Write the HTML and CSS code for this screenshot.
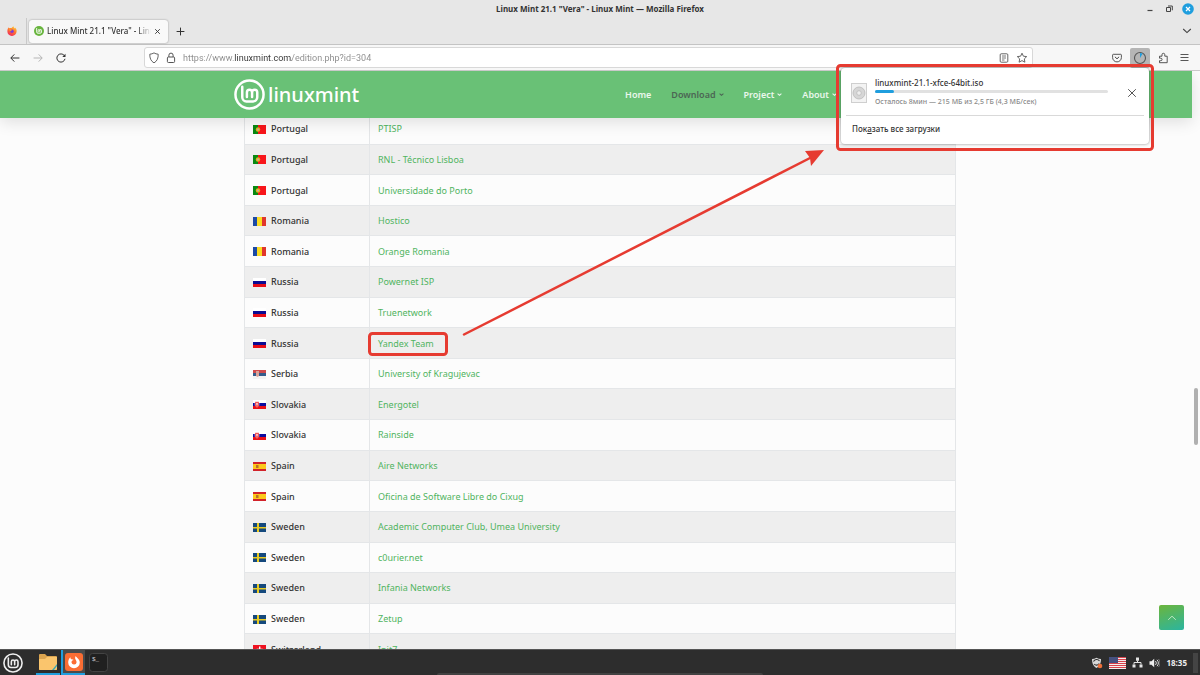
FILE: index.html
```html
<!DOCTYPE html>
<html lang="en">
<head>
<meta charset="utf-8">
<title>Linux Mint 21.1 "Vera" - Linux Mint — Mozilla Firefox</title>
<link rel="stylesheet" href="styles.css">
</head>
<body>
<svg class="defs" aria-hidden="true">
  <defs>
    <linearGradient id="fxg" x1="0.8" y1="0" x2="0.3" y2="1"><stop offset="0" stop-color="#ffd23c"/><stop offset="0.45" stop-color="#ff7a2e"/><stop offset="1" stop-color="#f0285e"/></linearGradient>
    <symbol id="mint" viewBox="0 0 30 30">
      <circle cx="15" cy="15" r="13.600" fill="none" stroke="currentColor" stroke-width="2.400"/>
      <path d="M8 7.500v10.200a4 4 0 0 0 4 4h6.500a4 4 0 0 0 4-4v-4.700a2.500 2.500 0 0 0-5 0v4.500M17.500 13a2.500 2.500 0 0 0-5 0v4.500" fill="none" stroke="currentColor" stroke-width="2.400" stroke-linecap="round"/>
    </symbol>
    <symbol id="mint-tab" viewBox="0 0 30 30">
      <circle cx="15" cy="15" r="15" fill="#69b53f"/>
      <path d="M8 7.500v10.200a4 4 0 0 0 4 4h6.500a4 4 0 0 0 4-4v-4.700a2.500 2.500 0 0 0-5 0v4.500M17.500 13a2.500 2.500 0 0 0-5 0v4.500" fill="none" stroke="#fff" stroke-width="2.800" stroke-linecap="round"/>
    </symbol>
    <symbol id="pt" viewBox="0 0 13 9"><path fill="#f8161b" d="M0 0h13v9H0z"/><path fill="#0a8a12" d="M0 0h5v9H0z"/><circle cx="5" cy="4.500" r="2.200" fill="#e3b31d"/><circle cx="5" cy="4.500" r="1.100" fill="#c9a9a0"/></symbol>
    <symbol id="ro" viewBox="0 0 13 9"><path fill="#e0362c" d="M0 0h13v9H0z"/><path fill="#fbdc22" d="M0 0h9v9H0z"/><path fill="#1c4aa5" d="M0 0h4v9H0z"/></symbol>
    <symbol id="ru" viewBox="0 0 13 9"><path fill="#fff" d="M0 0h13v9H0z"/><path fill="#0b0b93" d="M0 3h13v3H0z"/><path fill="#e60d16" d="M0 6h13v3H0z"/></symbol>
    <symbol id="rs" viewBox="0 0 13 9"><path fill="#f3f3f3" d="M0 0h13v9H0z"/><path fill="#cf4a4c" d="M0 0h13v3H0z"/><path fill="#345c8c" d="M0 3h13v3H0z"/><path fill="#d9a39a" d="M3 1h3v5l-1.500 1L3 6z"/></symbol>
    <symbol id="sk" viewBox="0 0 13 9"><path fill="#fff" d="M0 0h13v9H0z"/><path fill="#0b0ba0" d="M0 3h13v3H0z"/><path fill="#ea1017" d="M0 6h13v3H0z"/><path fill="#ea1017" stroke="#fff" stroke-width=".5" d="M2 1.800h4v3.500L4 7.300 2 5.300z"/><path stroke="#fff" stroke-width=".6" d="M4 2.500v3.500M3 3.500h2M2.800 4.700h2.400"/></symbol>
    <symbol id="es" viewBox="0 0 13 9"><path fill="#d2232a" d="M0 0h13v9H0z"/><path fill="#fcc81a" d="M0 2h13v5H0z"/><path fill="#b9702b" d="M3 3h2.500v3H3z"/></symbol>
    <symbol id="se" viewBox="0 0 13 9"><path fill="#15497d" d="M0 0h13v9H0z"/><path fill="#e8cb23" d="M4 0h2v9H4zM0 4h13v1.500H0z"/></symbol>
    <symbol id="ch" viewBox="0 0 13 9"><path fill="#ee1220" d="M0 0h13v9H0z"/><path fill="#fff" d="M6 1.500h1.400v6H6zM3.700 3.800h6v1.400h-6z"/></symbol>
    <symbol id="caret" viewBox="0 0 5 3"><path d="M.6.6l1.900 1.700L4.400.6" fill="none" stroke="currentColor" stroke-width="1.100"/></symbol>
  </defs>
</svg>

<header class="browser">
  <div class="titlebar">
    <div class="window-title">Linux Mint 21.1 "Vera" - Linux Mint — Mozilla Firefox</div>
    <div class="window-buttons">
      <button aria-label="Minimize"><svg width="12" height="12" viewBox="0 0 12 12"><path d="M3.500 7.500h5" stroke="#444" stroke-width="1.200"/></svg></button>
      <button aria-label="Restore"><svg width="12" height="12" viewBox="0 0 12 12"><path d="M3.500 4.500h4v4h-4zM5 3h4.300v4.300" fill="none" stroke="#444" stroke-width="1"/></svg></button>
      <button aria-label="Close"><svg width="12" height="12" viewBox="0 0 12 12"><circle cx="6" cy="6" r="5.800" fill="#1f9ede"/><path d="M4 4l4 4M8 4L4 8" stroke="#fff" stroke-width="1.200"/></svg></button>
    </div>
  </div>
  <div class="tabs">
    <button class="pinned" aria-label="Firefox View"><svg width="10" height="10" viewBox="0 0 10 10"><path d="M.4 5.200C.3 3.600 1 2.200 1.800 1.300c0 .5.200.8.500 1C3.200 2 4 2 4.600 2.100 5 1.200 5.800.600 6.600.2c-.1 1 .3 1.500 1.200 2.200C8 2 8 1.900 8 1.600c1.300 1.200 1.800 2.500 1.600 4A4.600 4.600 0 0 1 .4 5.200z" fill="url(#fxg)"/><circle cx="5" cy="5.200" r="1.700" fill="#7a3bd6"/><path d="M1.800 3.500c1.200-.6 2.700-.2 3.400.7-1 .1-1.600.6-1.900 1.200z" fill="#ff9a2a"/></svg></button>
    <div class="tab">
      <svg class="favicon" width="10" height="10"><use href="#mint-tab"/></svg>
      <span class="tab-title">Linux Mint 21.1 "Vera" - Linux Mint</span>
      <button aria-label="Close tab"><svg width="7" height="7" viewBox="0 0 7 7"><path d="M1.200 1.200l4.600 4.600M5.800 1.200L1.200 5.800" stroke="#333" stroke-width=".9"/></svg></button>
    </div>
    <button class="new-tab" aria-label="New tab"><svg width="9" height="9" viewBox="0 0 9 9"><path d="M4.500.6v7.800M.6 4.500h7.800" stroke="#333" stroke-width="1"/></svg></button>
    <button class="list-tabs" aria-label="List all tabs"><svg width="10" height="6" viewBox="0 0 10 6"><path d="M1.200 1l3.800 3.600L8.800 1" fill="none" stroke="#444" stroke-width="1.100"/></svg></button>
  </div>
  <div class="toolbar">
    <div class="history">
      <button aria-label="Back"><svg width="10" height="10" viewBox="0 0 10 10"><path d="M9.400 5H.9M4.300 1.400L.8 5l3.500 3.600" fill="none" stroke="#333" stroke-width="1"/></svg></button>
      <button aria-label="Forward"><svg width="10" height="10" viewBox="0 0 10 10"><path d="M.6 5h8.500M5.700 1.400L9.200 5 5.700 8.600" fill="none" stroke="#b5b5b5" stroke-width="1"/></svg></button>
      <button aria-label="Reload"><svg width="10" height="10" viewBox="0 0 10 10"><path d="M8.300 2.600A4.100 4.100 0 1 0 9 5.800" fill="none" stroke="#333" stroke-width="1"/><path d="M9.500.8v3.200H6.300z" fill="#333"/></svg></button>
    </div>
    <div class="urlbar">
      <svg width="10" height="12" viewBox="0 0 10 12"><path d="M5 .9C6.300 1.700 7.700 2.100 9.200 2.200 9.300 6 8.300 9 5 10.900 1.700 9 .7 6 .8 2.200 2.300 2.100 3.700 1.700 5 .9z" fill="none" stroke="#555" stroke-width=".9"/></svg>
      <svg width="10" height="12" viewBox="0 0 10 12"><rect x="1.400" y="5" width="7.200" height="5.500" rx="1" fill="none" stroke="#555"/><path d="M2.900 5V3.200a2.100 2.100 0 0 1 4.200 0V5" fill="none" stroke="#555"/></svg>
      <input class="url" type="text" aria-label="Address" value="https://www.linuxmint.com/edition.php?id=304">
      <button aria-label="Reader view"><svg width="10" height="10" viewBox="0 0 10 10"><rect x="1.200" y=".8" width="7.600" height="8.400" rx="1" fill="none" stroke="#555" stroke-width=".9"/><path d="M3 3h4M3 5h4M3 7h2.500" stroke="#555" stroke-width=".8"/></svg></button>
      <button aria-label="Bookmark"><svg width="12" height="12" viewBox="0 0 12 12"><path d="M6 1.200l1.400 3 3.300.4-2.400 2.300.6 3.300L6 8.600l-2.900 1.600.6-3.300L1.300 4.600l3.300-.4z" fill="none" stroke="#555" stroke-width=".9" stroke-linejoin="round"/></svg></button>
    </div>
    <div class="actions">
      <button aria-label="Pocket"><svg width="10" height="10" viewBox="0 0 10 10"><path d="M1.400 1.300h7.200a.8.8 0 0 1 .8.800v2.400a4.400 4.400 0 0 1-8.800 0V2.100a.8.800 0 0 1 .8-.8z" fill="none" stroke="#444" stroke-width=".9"/><path d="M2.900 3.800L5 5.800l2.100-2" fill="none" stroke="#444"/></svg></button>
      <button class="active" aria-label="Downloads"><svg width="14" height="14" viewBox="0 0 14 14"><circle cx="7" cy="7" r="5.500" fill="none" stroke="#555" stroke-width="1.100"/><path d="M7 7V2a5 5 0 0 1 2.600.8z" fill="#1f9ede"/></svg></button>
      <button aria-label="Extensions"><svg width="11" height="12" viewBox="0 0 11 12"><path d="M1.500 10.700h7.700V4.200H6.800V2.700a1.400 1.400 0 0 0-2.800 0v1.500H1.500v2h1.300a1.200 1.200 0 0 1 0 2.500H1.500z" fill="none" stroke="#444" stroke-width=".9" stroke-linejoin="round"/></svg></button>
      <button class="app-menu" aria-label="Menu"><svg width="9" height="9" viewBox="0 0 9 9"><path d="M.5 1.500h8M.5 4.500h8M.5 7.500h8" stroke="#444" stroke-width=".9"/></svg></button>
    </div>
  </div>
</header>

<main class="page">
  <div class="site-header">
    <div class="site-inner">
      <a class="brand" href="#"><svg width="31" height="31"><use href="#mint"/></svg><span>linuxmint</span></a>
      <nav>
        <a href="#">Home</a>
        <a class="current" href="#">Download<svg class="caret"><use href="#caret"/></svg></a>
        <a href="#">Project<svg class="caret"><use href="#caret"/></svg></a>
        <a href="#">About<svg class="caret"><use href="#caret"/></svg></a>
      </nav>
    </div>
  </div>
  <div class="content">
    <table class="mirrors">
      <tbody>
        <tr><td><span class="country"><svg class="flag"><use href="#pt"/></svg>Portugal</span></td><td><a href="#">PTISP</a></td></tr>
        <tr><td><span class="country"><svg class="flag"><use href="#pt"/></svg>Portugal</span></td><td><a href="#">RNL - Técnico Lisboa</a></td></tr>
        <tr><td><span class="country"><svg class="flag"><use href="#pt"/></svg>Portugal</span></td><td><a href="#">Universidade do Porto</a></td></tr>
        <tr><td><span class="country"><svg class="flag"><use href="#ro"/></svg>Romania</span></td><td><a href="#">Hostico</a></td></tr>
        <tr><td><span class="country"><svg class="flag"><use href="#ro"/></svg>Romania</span></td><td><a href="#">Orange Romania</a></td></tr>
        <tr><td><span class="country"><svg class="flag"><use href="#ru"/></svg>Russia</span></td><td><a href="#">Powernet ISP</a></td></tr>
        <tr><td><span class="country"><svg class="flag"><use href="#ru"/></svg>Russia</span></td><td><a href="#">Truenetwork</a></td></tr>
        <tr><td><span class="country"><svg class="flag"><use href="#ru"/></svg>Russia</span></td><td><a href="#">Yandex Team</a></td></tr>
        <tr><td><span class="country"><svg class="flag"><use href="#rs"/></svg>Serbia</span></td><td><a href="#">University of Kragujevac</a></td></tr>
        <tr><td><span class="country"><svg class="flag"><use href="#sk"/></svg>Slovakia</span></td><td><a href="#">Energotel</a></td></tr>
        <tr><td><span class="country"><svg class="flag"><use href="#sk"/></svg>Slovakia</span></td><td><a href="#">Rainside</a></td></tr>
        <tr><td><span class="country"><svg class="flag"><use href="#es"/></svg>Spain</span></td><td><a href="#">Aire Networks</a></td></tr>
        <tr><td><span class="country"><svg class="flag"><use href="#es"/></svg>Spain</span></td><td><a href="#">Oficina de Software Libre do Cixug</a></td></tr>
        <tr><td><span class="country"><svg class="flag"><use href="#se"/></svg>Sweden</span></td><td><a href="#">Academic Computer Club, Umea University</a></td></tr>
        <tr><td><span class="country"><svg class="flag"><use href="#se"/></svg>Sweden</span></td><td><a href="#">c0urier.net</a></td></tr>
        <tr><td><span class="country"><svg class="flag"><use href="#se"/></svg>Sweden</span></td><td><a href="#">Infania Networks</a></td></tr>
        <tr><td><span class="country"><svg class="flag"><use href="#se"/></svg>Sweden</span></td><td><a href="#">Zetup</a></td></tr>
        <tr><td><span class="country"><svg class="flag"><use href="#ch"/></svg>Switzerland</span></td><td><a href="#">Init7</a></td></tr>
      </tbody>
    </table>
  </div>
  <button class="to-top" aria-label="Back to top"><svg width="10" height="6" viewBox="0 0 10 6"><path d="M1.200 4.800L5 1.200l3.800 3.600" fill="none" stroke="#c8ecc8" stroke-width=".9"/></svg></button>
  <div class="scroll-thumb"></div>
</main>

<footer class="taskbar">
  <button class="start" aria-label="Menu"><svg width="20" height="20"><use href="#mint"/></svg></button>
  <button class="task open" aria-label="Files"><svg width="18" height="16" viewBox="0 0 18 16"><path d="M0 1a1 1 0 0 1 1-1h5l2 2h9a1 1 0 0 1 1 1v12a1 1 0 0 1-1 1H1a1 1 0 0 1-1-1z" fill="#dba44f"/><path d="M0 5h6l2-2h10v12a1 1 0 0 1-1 1H1a1 1 0 0 1-1-1z" fill="#fac56d"/><path d="M13 16l5-6v2l-3 4z" fill="#3ba7b5"/></svg></button>
  <button class="task focused" aria-label="Firefox"><svg width="18" height="18" viewBox="0 0 18 18"><rect width="18" height="18" rx="3" fill="#fb6d33"/><path d="M9 15.300a5.800 5.800 0 0 1-5.800-5.800c0-2.200.8-3.800 2.200-5.200 0 1 .3 1.600.8 2 .8-.2 1.700 0 2.500.7-1.600.3-2.400 1.200-2.200 2.600a2.600 2.600 0 0 0 5.100-.4c0-2.300-2.500-2.800-1-6.200.5 1.300 4.200 3 4.200 6.500A5.800 5.800 0 0 1 9 15.300z" fill="#fff"/></svg></button>
  <button class="task" aria-label="Terminal"><svg width="19" height="19" viewBox="0 0 19 19"><rect x=".5" y=".5" width="18" height="18" rx="3" fill="#202020" stroke="#444"/><text class="prompt" x="3" y="8">$_</text></svg></button>
  <div class="tray">
    <svg width="12" height="12" viewBox="0 0 12 12"><path d="M5.500.800c1.400.8 2.900 1.200 4.500 1.300 0 4-1 7-4.500 8.900C2 9.100 1 6.100 1 2.100 2.600 2 4.100 1.600 5.500.8z" fill="#d8d8d8"/><path d="M2.500 4.500a3.500 3.500 0 0 1 6-.5M8.200 6.500a3 3 0 0 1-5 .5" fill="none" stroke="#2d2d2d" stroke-width="1.100"/><circle cx="9" cy="9" r="2.300" fill="#f0703a"/></svg>
    <svg width="17" height="12" viewBox="0 0 17 12"><path fill="#f5eeee" d="M0 0h17v12H0z"/><path stroke="#d8434c" d="M0 .5h17M0 2.500h17M0 4.500h17M0 6.500h17M0 8.500h17M0 10.500h17"/><path fill="#46507f" d="M0 0h9v6H0z"/></svg>
    <svg width="11" height="11" viewBox="0 0 11 11"><path d="M4 .5h3v3.300H4zM.5 7.500h3v3h-3zM7.500 7.500h3v3h-3z" fill="#e4e4e4"/><path d="M5.500 3.500v2M2 7.500v-2h7v2" fill="none" stroke="#e4e4e4"/></svg>
    <svg width="11" height="10" viewBox="0 0 11 10"><path d="M.5 3.300h2L5.200.8v8.400L2.500 6.700h-2z" fill="#eee"/><path d="M6.500 3a3 3 0 0 1 0 4M8 1.800a4.500 4.500 0 0 1 0 6.400" fill="none" stroke="#ddd"/><path d="M9.500 1a6 6 0 0 1 0 8" fill="none" stroke="#777"/></svg>
    <time>18:35</time>
    <span class="show-desktop"></span>
  </div>
  <div class="edge-handle"></div>
</footer>

<section class="downloads" aria-label="Downloads">
  <div class="download">
    <svg width="16" height="20" viewBox="0 0 16 20"><rect x=".5" y=".5" width="15" height="19" fill="#f3f3f3" stroke="#cfcfcf"/><circle cx="8" cy="10" r="6" fill="#d6d6d6" stroke="#b9b9b9" stroke-width=".8"/><circle cx="8" cy="10" r="2.300" fill="#eee" stroke="#bbb" stroke-width=".8"/></svg>
    <div class="download-info">
      <div class="file-name">linuxmint-21.1-xfce-64bit.iso</div>
      <div class="track"><div class="fill" style="width:8%"></div></div>
      <div class="status">Осталось 8мин — 215 МБ из 2,5 ГБ (4,3 МБ/сек)</div>
    </div>
    <button aria-label="Cancel"><svg width="10" height="10" viewBox="0 0 10 10"><path d="M1.200 1.200l7.600 7.600M8.800 1.200L1.200 8.800" stroke="#444" stroke-width=".9"/></svg></button>
  </div>
  <button class="show-all">Пок<u>а</u>зать все загрузки</button>
</section>

<svg class="annotations" viewBox="0 0 1200 675" aria-hidden="true">
  <g fill="none" stroke="#e63b31">
    <rect x="837.500" y="65.500" width="315" height="84" rx="3" stroke-width="3"/>
    <rect x="369.500" y="333.500" width="77" height="21" rx="3" stroke-width="3"/>
    <path d="M464 334.500L812 157" stroke-width="2.500" stroke-linecap="round"/>
  </g>
  <path d="M824 150l-19 1 5 7 1 8z" fill="#e63b31"/>
</svg>
</body>
</html>
```
FILE: styles.css
```css
* { box-sizing: border-box; }
body {
  margin: 0;
  height: 100vh;
  display: flex;
  flex-direction: column;
  position: relative;
  overflow: hidden;
  font-family: "Noto Sans", "Open Sans", sans-serif;
  font-size: 9px;
  line-height: 12px;
  color: #333;
}
button {
  margin: 0;
  padding: 0;
  border: 0;
  background: none;
  font: inherit;
  color: inherit;
  display: flex;
  align-items: center;
  justify-content: center;
}
svg { display: block; flex: none; }
a { text-decoration: none; }
.defs { position: absolute; width: 0; height: 0; }

/* Browser window */
.browser { flex: none; background: #e7e7e7; }
.titlebar {
  display: grid;
  grid-template-columns: 1fr auto 1fr;
  align-items: center;
  height: 18px;
}
.window-title { grid-column: 2; font-size: 8px; font-weight: 700; }
.window-buttons { display: flex; gap: 7px; justify-self: end; padding-right: 6px; }
.tabs {
  display: flex;
  align-items: center;
  height: 27px;
  border-bottom: 1px solid #c4c4c4;
}
.pinned { width: 27px; height: 26px; padding-right: 3px; border-right: 1px solid #c9c9c9; }
.tab {
  display: flex;
  align-items: center;
  gap: 3px;
  width: 139px;
  height: 23px;
  margin-left: 2px;
  padding: 0 7px 0 5px;
  border-radius: 3px;
  background: #f9f9f9;
  box-shadow: 0 0 2px #8c8c8c;
}
.tab-title {
  flex: 1;
  overflow: hidden;
  white-space: nowrap;
  font-size: 8px;
  font-weight: 500;
  mask-image: linear-gradient(to left, transparent, #000 14px);
}
.new-tab { margin-left: 8px; }
.list-tabs { margin-left: auto; padding-right: 8px; }
.toolbar {
  display: flex;
  align-items: center;
  height: 26px;
  border-bottom: 1px solid #c9c9c9;
  background: #f7f7f7;
}
.history { display: flex; gap: 13px; width: 144px; padding-left: 10px; }
.urlbar {
  display: flex;
  align-items: center;
  gap: 7px;
  flex: 1;
  height: 21px;
  padding: 0 4px;
  border: 1px solid #d8d8d8;
  border-radius: 3px;
  background: #fff;
}
.url {
  flex: 1;
  min-width: 0;
  border: 0;
  padding: 0;
  outline: 0;
  font-family: Roboto, "Noto Sans", sans-serif;
  font-size: 9px;
  color: transparent;
  background: linear-gradient(to right, #8a8a8a 51px, #333 51px, #333 109px, #8a8a8a 109px);
  background-clip: text;
}
.actions { display: flex; align-items: center; gap: 8px; padding: 0 11px 0 79px; }
.actions .active { width: 20px; height: 20px; border-radius: 2px; background: #b5b5b5; }
.app-menu { padding-left: 3px; }

/* Web page */
.page {
  flex: 1;
  min-height: 0;
  position: relative;
  overflow: hidden;
  background: #fcfcfc;
}
.site-header {
  position: relative;
  height: 47px;
  margin-right: 8px;
  padding-left: 8px;
  background: #69c176;
  box-shadow: 0 4px 16px rgba(0, 0, 0, .12);
}
.site-inner {
  display: flex;
  align-items: center;
  justify-content: space-between;
  max-width: 732px;
  height: 100%;
  margin: 0 auto;
}
.brand {
  display: flex;
  align-items: center;
  gap: 3px;
  font-size: 20px;
  font-weight: 500;
  line-height: 28px;
  color: #fff;
}
nav { display: flex; gap: 20px; padding-right: 129px; }
nav a { display: flex; align-items: center; gap: 3px; font-weight: 600; color: #eaf7ec; }
nav .current { color: #4c6654; }
.caret { width: 5px; height: 3px; }
.content { margin-top: -5px; }
.mirrors {
  width: 100%;
  max-width: 712px;
  height: 552px;
  margin: 0 auto;
  border-collapse: collapse;
}
.mirrors td { padding: 1px 8px 0; border: 1px solid #e4e6e8; vertical-align: middle; }
.mirrors td:first-child { width: 125px; }
.mirrors tr:nth-child(even) { background: #eee; }
.mirrors a { color: #50b45f; }
.country { display: flex; align-items: center; gap: 5px; font-weight: 500; }
.flag { width: 13px; height: 9px; }
.to-top {
  position: absolute;
  right: 16px;
  bottom: 19px;
  width: 25px;
  height: 25px;
  border-radius: 2px;
  background: linear-gradient(160deg, #6cb53c, #2bb5a0);
}
.scroll-thumb {
  position: absolute;
  right: 2px;
  top: 60%;
  width: 4px;
  height: 57px;
  margin-top: -30px;
  border-radius: 2px;
  background: #b0b0b0;
}

/* Desktop panel */
.taskbar {
  flex: none;
  display: flex;
  align-items: center;
  position: relative;
  height: 26px;
  border-top: 1px solid #555;
  background: #2d2d2d;
  color: #eee;
}
.start { padding: 0 13px 0 3px; }
.task { width: 24px; height: 25px; margin-right: 1px; }
.open { border-bottom: 2px solid #1f9ede; }
.focused { border-left: 2px solid #1f9ede; border-bottom: 2px solid #1f9ede; background: #4b4b4b; }
.prompt { font-family: "Liberation Mono", monospace; font-size: 6px; fill: #ddd; }
.tray { display: flex; align-items: center; gap: 6px; margin-left: auto; font-size: 8px; font-weight: 700; }
.show-desktop { width: 5px; height: 20px; margin-right: 2px; background: #444; }
.edge-handle {
  position: absolute;
  left: 50%;
  bottom: 0;
  width: 326px;
  height: 2px;
  margin-left: -163px;
  border-radius: 2px 2px 0 0;
  background: #424242;
}

/* Downloads popup */
.downloads {
  position: absolute;
  top: 68px;
  right: 51px;
  width: 308px;
  padding: 9px 5px 2px;
  border-radius: 4px;
  background: #fff;
  box-shadow: 0 0 3px rgba(0, 0, 0, .45);
}
.download {
  display: flex;
  align-items: center;
  gap: 8px;
  padding: 0 7px 7px 5px;
  border-bottom: 1px solid #d9d9d9;
}
.download-info { flex: 1; margin-right: 11px; }
.file-name { font-size: 8px; font-weight: 500; }
.track { height: 3px; margin: 1px 0 3px; border-radius: 2px; background: #e1e1e1; }
.fill { height: 3px; border-radius: 2px; background: #1f9ede; }
.status { font-size: 7px; font-weight: 500; color: #8a8a8a; }
.show-all { height: 26px; padding: 0 6px; font-size: 8px; font-weight: 500; }

.annotations { position: absolute; left: 0; top: 0; width: 100%; height: 100%; pointer-events: none; }
```
